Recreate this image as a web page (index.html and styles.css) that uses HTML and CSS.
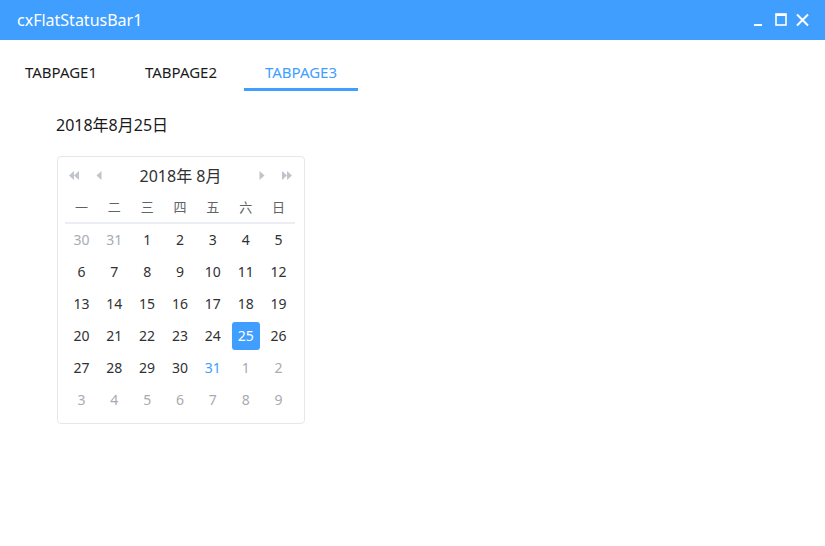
FILE: index.html
```html
<!DOCTYPE html>
<html lang="zh">
<head>
<meta charset="utf-8">
<title>cxFlatStatusBar1</title>
<link rel="stylesheet" href="styles.css">
</head>
<body>
<div class="titlebar">
  <span class="title">cxFlatStatusBar1</span>
  <div class="controls">
    <svg class="ctl" width="12" height="14" viewBox="0 0 12 14"><rect x="0" y="11" width="8" height="2" fill="#fff"/></svg>
    <svg class="ctl" width="12" height="14" viewBox="0 0 12 14"><rect x="1" y="1" width="10" height="11" fill="none" stroke="#fff" stroke-width="1.6"/><rect x="1" y="1" width="10" height="2" fill="#fff"/></svg>
    <svg class="ctl" width="13" height="14" viewBox="0 0 13 14"><path d="M1 1.5 L12 12.5 M12 1.5 L1 12.5" stroke="#fff" stroke-width="2"/></svg>
  </div>
</div>
<div class="tabs">
  <div class="tab">TABPAGE1</div>
  <div class="tab">TABPAGE2</div>
  <div class="tab active">TABPAGE3</div>
</div>
<div class="content">
  <div class="date-label">2018年8月25日</div>
  <div class="calendar">
    <div class="cal-head">
      <div class="nav-left">
        <svg width="11" height="10" viewBox="0 0 11 10"><polygon points="5,0 5,9 0,4.5" fill="#c0c4cc"/><polygon points="10,0 10,9 5,4.5" fill="#c0c4cc"/></svg>
        <svg width="6" height="10" viewBox="0 0 6 10"><polygon points="5.5,0 5.5,9 0.5,4.5" fill="#c0c4cc"/></svg>
      </div>
      <div class="cal-title">2018年 8月</div>
      <div class="nav-right">
        <svg width="6" height="10" viewBox="0 0 6 10"><polygon points="0.5,0 0.5,9 5.5,4.5" fill="#c0c4cc"/></svg>
        <svg width="11" height="10" viewBox="0 0 11 10"><polygon points="1,0 1,9 6,4.5" fill="#c0c4cc"/><polygon points="6,0 6,9 11,4.5" fill="#c0c4cc"/></svg>
      </div>
    </div>
    <div class="weekdays">
      <span>一</span><span>二</span><span>三</span><span>四</span><span>五</span><span>六</span><span>日</span>
    </div>
    <div class="days">
      <span class="other">30</span><span class="other">31</span><span>1</span><span>2</span><span>3</span><span>4</span><span>5</span>
      <span>6</span><span>7</span><span>8</span><span>9</span><span>10</span><span>11</span><span>12</span>
      <span>13</span><span>14</span><span>15</span><span>16</span><span>17</span><span>18</span><span>19</span>
      <span>20</span><span>21</span><span>22</span><span>23</span><span>24</span><span class="selected"><b>25</b></span><span>26</span>
      <span>27</span><span>28</span><span>29</span><span>30</span><span class="today">31</span><span class="other">1</span><span class="other">2</span>
      <span class="other">3</span><span class="other">4</span><span class="other">5</span><span class="other">6</span><span class="other">7</span><span class="other">8</span><span class="other">9</span>
    </div>
  </div>
</div>
</body>
</html>
```

FILE: styles.css
```css
html, body {
  margin: 0;
  padding: 0;
  background: #ffffff;
  font-family: "Noto Sans", "Noto Sans CJK SC", sans-serif;
  color: #1f1f1f;
}

.titlebar {
  height: 40px;
  background: #409eff;
  display: flex;
  align-items: center;
  justify-content: space-between;
  padding: 0 16px 0 17px;
}

.title {
  color: #ffffff;
  font-size: 16px;
}

.controls {
  display: flex;
  align-items: center;
  gap: 9px;
}

.ctl {
  display: block;
}

.tabs {
  display: flex;
  gap: 6px;
  padding-left: 4px;
  padding-top: 20px;
}

.tab {
  width: 114px;
  text-align: center;
  font-size: 15px;
  line-height: 24px;
  padding-bottom: 4px;
  border-bottom: 3px solid transparent;
  color: #1a1a1a;
}

.tab.active {
  color: #409eff;
  border-bottom-color: #409eff;
}

.content {
  padding-left: 56px;
  padding-top: 22px;
}

.date-label {
  font-size: 16px;
  line-height: 24px;
  color: #1a1a1a;
}

.calendar {
  margin-top: 19px;
  margin-left: 1px;
  width: 230px;
  padding: 3px 9px 7px 7px;
  border: 1px solid #e4e7ed;
  border-radius: 4px;
}

.cal-head {
  height: 31px;
  display: flex;
  align-items: center;
  justify-content: space-between;
}

.nav-left, .nav-right {
  display: flex;
  align-items: center;
  gap: 16px;
  width: 40px;
}

.nav-left {
  padding-left: 4px;
}

.nav-right {
  justify-content: flex-end;
  padding-right: 3px;
}

.cal-title {
  font-size: 16px;
  color: #303133;
  line-height: 20px;
}

.weekdays {
  display: grid;
  grid-template-columns: repeat(7, 1fr);
  height: 31px;
  border-bottom: 2px solid #ebeef5;
  align-items: center;
  text-align: center;
  font-size: 13px;
  color: #606266;
}

.days {
  display: grid;
  grid-template-columns: repeat(7, 1fr);
  grid-auto-rows: 32px;
  text-align: center;
  font-size: 14px;
  line-height: 18px;
  color: #303133;
}

.days span {
  display: flex;
  align-items: center;
  justify-content: center;
  padding-bottom: 1px;
}

.days .other {
  color: #a8abb2;
}

.days .today {
  color: #409eff;
}

.days .selected b {
  font-weight: normal;
  display: flex;
  align-items: center;
  justify-content: center;
  width: 28px;
  height: 28px;
  border-radius: 3px;
  background: #409eff;
  color: #ffffff;
}
```
